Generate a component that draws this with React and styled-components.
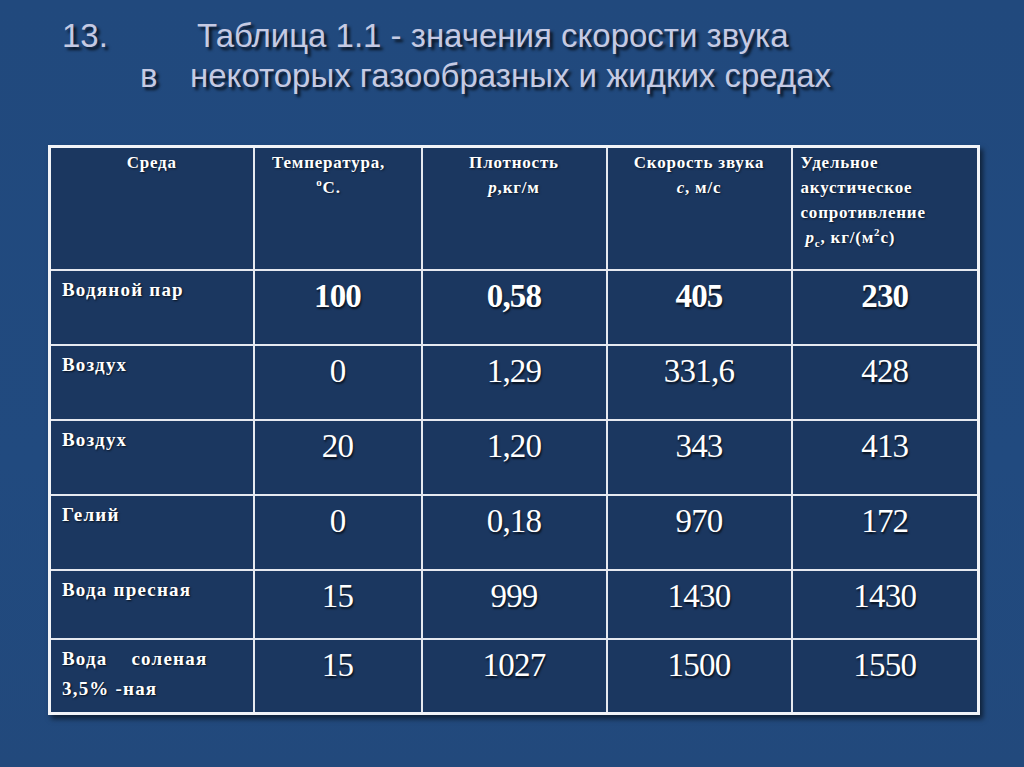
import React from 'react';
import styled, { createGlobalStyle } from 'styled-components';

const GlobalStyle = createGlobalStyle`
  html, body {
    margin: 0;
    padding: 0;
    background: #214a7e;
  }
`;

const Slide = styled.div`
  width: 1024px;
  height: 767px;
  background: linear-gradient(180deg, #21497d 0%, #214a7f 60%, #22497c 100%);
  box-sizing: border-box;
  padding: 16px 0 0 48px;
  overflow: hidden;
`;

const Title = styled.h1`
  margin: 0;
  font-family: "Liberation Sans", Arial, sans-serif;
  font-weight: normal;
  font-size: 33px;
  line-height: 40px;
  color: #c5cae3;
  text-shadow: 3px 3px 3px rgba(0, 0, 0, 0.75);
`;

const TitleLine = styled.div`
  display: flex;
  padding-left: ${(p) => p.$indent}px;
`;

const TitleNum = styled.span`
  width: ${(p) => p.$w}px;
  flex-shrink: 0;
`;

const Table = styled.table`
  margin-top: 49px;
  width: 929px;
  table-layout: fixed;
  border-collapse: collapse;
  background: #1b3760;
  border: 3px solid #f2f4f8;
  box-shadow: 3px 4px 5px rgba(0, 0, 0, 0.55);
  font-family: "Liberation Serif", "Times New Roman", serif;
  color: #ffffff;

  sup,
  sub {
    font-size: 0.65em;
    line-height: 0;
  }
`;

const Row = styled.tr`
  height: ${(p) => p.$h}px;
`;

const HeadCell = styled.th`
  border: 2px solid #e6e9f0;
  vertical-align: top;
  padding: 2px ${(p) => p.$pr ?? 6}px 0 ${(p) => p.$pl ?? 6}px;
  font-size: 17px;
  line-height: 25px;
  font-weight: bold;
  letter-spacing: 0.8px;
  text-align: ${(p) => p.$align || 'center'};
  text-shadow: 1px 1px 2px rgba(0, 0, 0, 0.6);
`;

const LabelCell = styled.td`
  border: 2px solid #e6e9f0;
  vertical-align: top;
  padding: 4px 6px 0 11px;
  font-size: 19px;
  line-height: 30px;
  font-weight: bold;
  letter-spacing: 1.2px;
  text-shadow: 1px 1px 2px rgba(0, 0, 0, 0.7);
`;

const NumCell = styled.td`
  border: 2px solid #e6e9f0;
  vertical-align: top;
  text-align: center;
  padding: 7px 0 0;
  font-size: 33px;
  line-height: 36px;
  font-weight: ${(p) => (p.$bold ? 'bold' : 'normal')};
  letter-spacing: -0.8px;
  text-shadow: 1px 2px 2px rgba(0, 0, 0, 0.7);
`;

const Wide = styled.span`
  word-spacing: 18px;
`;

const Indent = styled.span`
  padding-left: 5px;
`;

const rows = [
  { label: 'Водяной пар', values: ['100', '0,58', '405', '230'], bold: true, h: 75 },
  { label: 'Воздух', values: ['0', '1,29', '331,6', '428'], h: 75 },
  { label: 'Воздух', values: ['20', '1,20', '343', '413'], h: 75 },
  { label: 'Гелий', values: ['0', '0,18', '970', '172'], h: 75 },
  { label: 'Вода пресная', values: ['15', '999', '1430', '1430'], h: 69 },
  { label: 'salt', values: ['15', '1027', '1500', '1550'], h: 75 },
];

const App = () => (
  <Slide>
    <GlobalStyle />
    <Title>
      <TitleLine $indent={14}>
        <TitleNum $w={135}>13.</TitleNum>
        <span>Таблица 1.1 - значения скорости звука</span>
      </TitleLine>
      <TitleLine $indent={92}>
        <TitleNum $w={50}>в</TitleNum>
        <span>некоторых газообразных и жидких средах</span>
      </TitleLine>
    </Title>

    <Table>
      <colgroup>
        <col style={{ width: 204 }} />
        <col style={{ width: 168 }} />
        <col style={{ width: 185 }} />
        <col style={{ width: 185 }} />
        <col style={{ width: 187 }} />
      </colgroup>
      <thead>
        <Row $h={123}>
          <HeadCell>Среда</HeadCell>
          <HeadCell $pl={0} $pr={18}>
            Температура,
            <br />
            <sup>o</sup>C.
          </HeadCell>
          <HeadCell>
            Плотность
            <br />
            <i>p</i>,кг/м
          </HeadCell>
          <HeadCell>
            Скорость звука
            <br />
            <i>c</i>, м/с
          </HeadCell>
          <HeadCell $align="left" $pl={8}>
            Удельное
            <br />
            акустическое
            <br />
            сопротивление
            <br />
            <Indent>
              <i>p</i>
              <sub>c</sub>, кг/(м<sup>2</sup>с)
            </Indent>
          </HeadCell>
        </Row>
      </thead>
      <tbody>
        {rows.map((r, i) => (
          <Row key={i} $h={r.h}>
            <LabelCell>
              {r.label === 'salt' ? (
                <>
                  <Wide>Вода соленая</Wide>
                  <br />
                  3,5% -ная
                </>
              ) : (
                r.label
              )}
            </LabelCell>
            {r.values.map((v, j) => (
              <NumCell key={j} $bold={r.bold}>
                {v}
              </NumCell>
            ))}
          </Row>
        ))}
      </tbody>
    </Table>
  </Slide>
);

export default App;
